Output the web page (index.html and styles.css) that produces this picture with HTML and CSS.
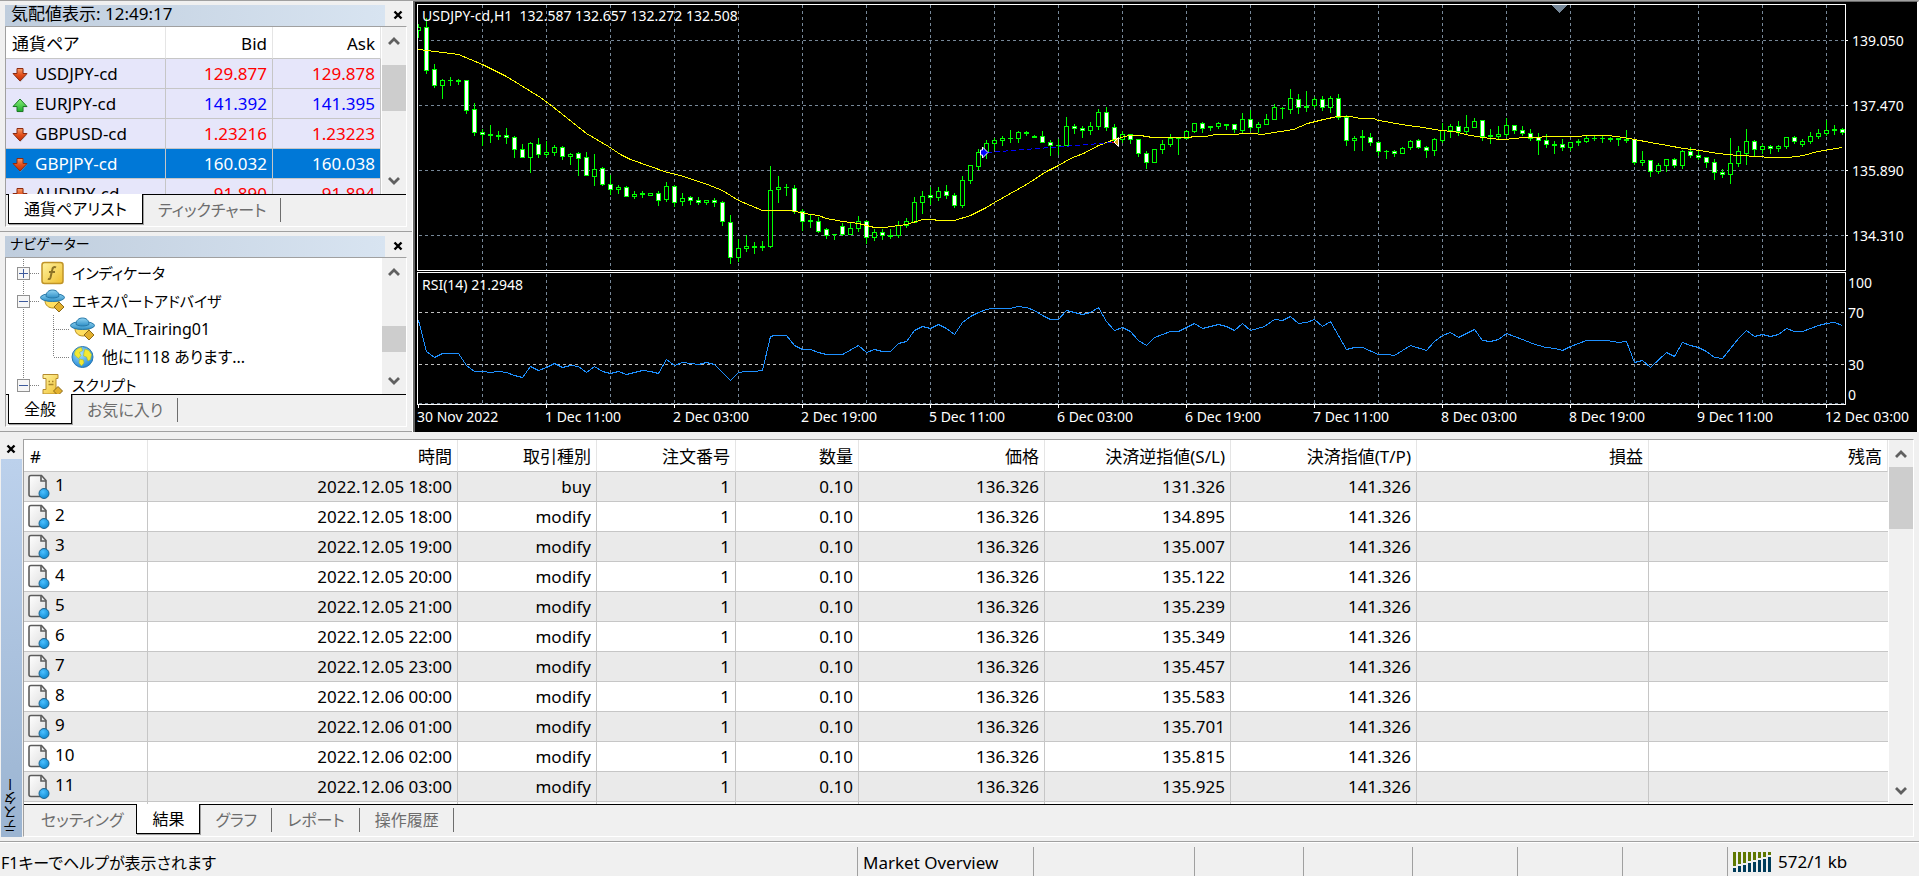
FILE: index.html
```html
<!DOCTYPE html>
<html lang="ja">
<head>
<meta charset="utf-8">
<meta name="viewport" content="width=device-width, initial-scale=1">
<title>USDJPY-cd,H1</title>
<link rel="stylesheet" href="styles.css">
</head>
<body>
<svg class="defs" aria-hidden="true">
  <defs>
    <linearGradient id="g-red" x1="0" y1="0" x2="0" y2="1"><stop offset="0" stop-color="#f9a06a"/><stop offset=".5" stop-color="#e2501c"/><stop offset="1" stop-color="#c23008"/></linearGradient>
    <linearGradient id="g-green" x1="0" y1="0" x2="0" y2="1"><stop offset="0" stop-color="#8af07a"/><stop offset="1" stop-color="#1fae2b"/></linearGradient>
    <linearGradient id="g-gold" x1="0" y1="0" x2="1" y2="1"><stop offset="0" stop-color="#fff3a0"/><stop offset="1" stop-color="#efbf2e"/></linearGradient>
    <linearGradient id="g-hat" x1="0" y1="0" x2="0" y2="1"><stop offset="0" stop-color="#8fd3f2"/><stop offset="1" stop-color="#2f8fc6"/></linearGradient>
    <linearGradient id="g-page" x1="0" y1="0" x2="1" y2="1"><stop offset="0" stop-color="#ffffff"/><stop offset="1" stop-color="#dcdcdc"/></linearGradient>
    <radialGradient id="g-ball" cx=".4" cy=".35" r=".7"><stop offset="0" stop-color="#4cc0ff"/><stop offset="1" stop-color="#0a86cf"/></radialGradient>
    <radialGradient id="g-globe" cx=".4" cy=".35" r=".7"><stop offset="0" stop-color="#a8e2ff"/><stop offset="1" stop-color="#1c84d6"/></radialGradient>
    <symbol id="i-down" viewBox="0 0 16 16"><path d="M5 1.500h6v5h4L8 14.500 1 6.500h4z" transform="translate(.5 .8)" fill="#999" opacity=".5"/><path d="M5 1.500h6v5h4L8 14 1 6.500h4z" fill="url(#g-red)" stroke="#8e2a10"/></symbol>
    <symbol id="i-up" viewBox="0 0 16 16"><path d="M5 14.500h6v-5h4L8 2 1 9.500h4z" transform="translate(.5 .8)" fill="#999" opacity=".5"/><path d="M5 14.500h6v-5h4L8 2 1 9.500h4z" fill="url(#g-green)" stroke="#1c7a26"/></symbol>
    <symbol id="i-func" viewBox="0 0 24 24"><rect x="1.500" y="1.500" width="21" height="21" rx="2.500" fill="url(#g-gold)" stroke="#c09428" stroke-width="1.500"/><path d="M15.500 6.500c-2-1.200-3.300 0-3.700 2L10 16.500c-.4 1.600-1.200 2-2.500 1.200M8.500 11h6" fill="none" stroke="#8c7326" stroke-width="2"/></symbol>
    <symbol id="i-expert" viewBox="0 0 25 24"><path d="M5 11.500c0 5 4 7.500 8 7.500s6-3 6-7z" fill="#ffdf60" stroke="#b58b1c"/><ellipse cx="12.500" cy="8.500" rx="12" ry="4" fill="url(#g-hat)" stroke="#2878a8"/><path d="M6 7.500C6 3 9 1 12.500 1S19 3 19 7.500c-3.500 2-9.500 2-13 0z" fill="url(#g-hat)" stroke="#2878a8"/><path d="M19 13l5 5-5 5-5-5z" fill="#e2b02e" stroke="#8c6a18"/></symbol>
    <symbol id="i-globe" viewBox="0 0 24 24"><circle cx="12" cy="12" r="10.500" fill="url(#g-globe)" stroke="#2d78ae"/><path d="M5 5.500c2-2 4-3 6-3l1 3-3 2 1.500 3-2.500 3-3-2.500C3.500 10 4 7.500 5 5.500zM14.500 4l4 1.500 2.500 4-1 5-2.500 1.500-1.500-4-3-1 .5-3.500zM9 14l4 1 .5 3-2.500 3-2.500-3z" fill="#f4e832" stroke="#9cb838" stroke-width=".6"/></symbol>
    <symbol id="i-script" viewBox="0 0 24 24"><path d="M2.500 1.500h15v4h-2v11h3v4.500h-16v-4.500h3v-11h-3z" fill="url(#g-gold)" stroke="#b58b2c"/><path d="M8 8.500h1.500m2 0H13M8 11.500h5" stroke="#a88428" stroke-width="1.500"/><path d="M17.500 13.500l4.500 4.500-4.500 4.500-4.500-4.500z" fill="#e2b02e" stroke="#8c6a18"/></symbol>
    <symbol id="i-doc" viewBox="0 0 24 26"><path d="M4 1.500h10.500l4.500 5v16H4c-1.400 0-2-.6-2-2v-17c0-1.400.6-2 2-2z" fill="url(#g-page)" stroke="#5c5c5c" stroke-width="1.600"/><path d="M14 1.500V7h5" fill="none" stroke="#5c5c5c" stroke-width="1.600"/><circle cx="17" cy="19.500" r="5" fill="url(#g-ball)" stroke="#20648e"/></symbol>
    <symbol id="i-close" viewBox="0 0 10 10"><path d="M1.500 1.500l7 7m0-7l-7 7" stroke="#000" stroke-width="2.400"/></symbol>
    <symbol id="i-chev-up" viewBox="0 0 12 10"><path d="M1 8l5-5 5 5" fill="none" stroke="#606060" stroke-width="2.800"/></symbol>
    <symbol id="i-chev-down" viewBox="0 0 12 10"><path d="M1 2l5 5 5-5" fill="none" stroke="#606060" stroke-width="2.800"/></symbol>
    <symbol id="i-box" viewBox="0 0 13 13"><rect x=".5" y=".5" width="12" height="12" fill="#f6f6f6" stroke="#919191"/><path d="M2 6.500h9" stroke="#3d5a9c"/></symbol>
  </defs>
</svg>

<main class="workspace">
  <div class="dock">
    <section class="panel market">
      <header class="titlebar"><h2 class="title">気配値表示: 12:49:17</h2><button class="close" aria-label="閉じる"><svg width="10" height="10"><use href="#i-close"/></svg></button></header>
      <div class="frame">
        <div class="view">
          <div class="clip">
            <table class="grid quotes">
              <colgroup><col class="c-symbol"><col class="c-bid"><col class="c-ask"></colgroup>
              <thead><tr><th class="left">通貨ペア</th><th>Bid</th><th>Ask</th></tr></thead>
              <tbody>
                <tr class="down"><td><svg class="arrow"><use href="#i-down"/></svg>USDJPY-cd</td><td>129.877</td><td>129.878</td></tr>
                <tr class="up"><td><svg class="arrow"><use href="#i-up"/></svg>EURJPY-cd</td><td>141.392</td><td>141.395</td></tr>
                <tr class="down"><td><svg class="arrow"><use href="#i-down"/></svg>GBPUSD-cd</td><td>1.23216</td><td>1.23223</td></tr>
                <tr class="selected"><td><svg class="arrow"><use href="#i-down"/></svg>GBPJPY-cd</td><td>160.032</td><td>160.038</td></tr>
                <tr class="down"><td><svg class="arrow"><use href="#i-down"/></svg>AUDJPY-cd</td><td>91.890</td><td>91.894</td></tr>
              </tbody>
            </table>
          </div>
          <div class="scrollbar"><button class="step" aria-label="上へ"><svg width="12" height="10"><use href="#i-chev-up"/></svg></button><div class="track"><div class="thumb thumb-market"></div></div><button class="step" aria-label="下へ"><svg width="12" height="10"><use href="#i-chev-down"/></svg></button></div>
        </div>
        <nav class="tabs"><button class="tab active">通貨ペアリスト</button><button class="tab">ティックチャート</button></nav>
      </div>
    </section>

    <section class="panel navigator">
      <header class="titlebar"><h2 class="title small">ナビゲーター</h2><button class="close" aria-label="閉じる"><svg width="10" height="10"><use href="#i-close"/></svg></button></header>
      <div class="frame">
        <div class="view">
          <div class="clip">
            <ul class="tree">
              <li class="node kana"><svg class="guide" width="34" height="28"><path class="dots" d="M17.500 0v28M24 14.500h10"/><use href="#i-box" x="11" y="8" width="13" height="13"/><path d="M17.500 10v9" stroke="#3d5a9c"/></svg><svg class="icon"><use href="#i-func"/></svg>インディケータ</li>
              <li class="node kana"><svg class="guide" width="34" height="28"><path class="dots" d="M17.500 0v28M24 14.500h10"/><use href="#i-box" x="11" y="8" width="13" height="13"/></svg><svg class="icon"><use href="#i-expert"/></svg>エキスパートアドバイザ</li>
              <li class="node"><svg class="guide" width="64" height="28"><path class="dots" d="M17.500 0v28M47.500 0v28M47.500 14.500h17"/></svg><svg class="icon"><use href="#i-expert"/></svg>MA_Trairing01</li>
              <li class="node"><svg class="guide" width="64" height="28"><path class="dots" d="M17.500 0v28M47.500 0v14M47.500 14.500h17"/></svg><svg class="icon"><use href="#i-globe"/></svg>他に1118 あります...</li>
              <li class="node kana"><svg class="guide" width="34" height="28"><path class="dots" d="M17.500 0v14M24 14.500h10"/><use href="#i-box" x="11" y="8" width="13" height="13"/></svg><svg class="icon"><use href="#i-script"/></svg>スクリプト</li>
            </ul>
          </div>
          <div class="scrollbar"><button class="step" aria-label="上へ"><svg width="12" height="10"><use href="#i-chev-up"/></svg></button><div class="track"><div class="thumb thumb-nav"></div></div><button class="step" aria-label="下へ"><svg width="12" height="10"><use href="#i-chev-down"/></svg></button></div>
        </div>
        <nav class="tabs"><button class="tab active">全般</button><button class="tab">お気に入り</button></nav>
      </div>
    </section>
  </div>

  <section class="chart"><svg id="chart" viewBox="415 2 1502 429" preserveAspectRatio="xMinYMin meet" role="img" aria-label="USDJPY-cd,H1"></svg></section>
</main>

<section class="tester">
  <div class="side">
    <button class="close" aria-label="閉じる"><svg width="10" height="10"><use href="#i-close"/></svg></button>
    <h2 class="side-title">テスター</h2>
  </div>
  <div class="frame">
    <div class="view">
      <div class="clip">
        <table class="grid results">
          <colgroup><col class="w-no"><col class="w-time"><col class="w-kind"><col class="w-kind"><col class="w-lots"><col class="w-price"><col class="w-price"><col class="w-price"><col class="w-profit"><col></colgroup>
          <thead><tr><th class="left">#</th><th>時間</th><th>取引種別</th><th>注文番号</th><th>数量</th><th>価格</th><th>決済逆指値(S/L)</th><th>決済指値(T/P)</th><th>損益</th><th>残高</th></tr></thead>
          <tbody id="results"></tbody>
        </table>
      </div>
      <div class="scrollbar"><button class="step" aria-label="上へ"><svg width="12" height="10"><use href="#i-chev-up"/></svg></button><div class="track"><div class="thumb thumb-tester"></div></div><button class="step" aria-label="下へ"><svg width="12" height="10"><use href="#i-chev-down"/></svg></button></div>
    </div>
    <nav class="tabs"><button class="tab">セッティング</button><button class="tab active">結果</button><button class="tab">グラフ</button><button class="tab">レポート</button><button class="tab">操作履歴</button></nav>
  </div>
</section>

<footer class="status">
  <div class="cell help">F1キーでヘルプが表示されます</div>
  <div class="cell s1">Market Overview</div>
  <div class="cell s2"></div>
  <div class="cell s3"></div>
  <div class="cell s3"></div>
  <div class="cell s4"></div>
  <div class="cell s4"></div>
  <div class="cell s4"></div>
  <div class="cell net"><svg width="38" height="20" shape-rendering="crispEdges"><path fill="#5f7800" d="M0 0h3v14H0zM5 0h3v12H5zM10 0h3v11h-3zM15 0h3v9h-3zM20 0h3v8h-3zM25 0h3v6h-3zM30 0h3v5h-3zM35 0h3v3h-3z"/><path fill="#003c5a" d="M0 16h3v4H0zM5 14h3v6H5zM10 13h3v7h-3zM15 11h3v9h-3zM20 10h3v10h-3zM25 8h3v12h-3zM30 7h3v13h-3zM35 5h3v15h-3z"/></svg>572/1 kb</div>
</footer>
<script src="app.js"></script>
</body>
</html>
```

FILE: styles.css
```css
* { box-sizing: border-box; }
html, body { height: 100%; }
body {
  margin: 0;
  display: flex;
  flex-direction: column;
  background: #f0f0f0;
  color: #000;
  font-family: "Noto Sans", "Noto Sans CJK JP", sans-serif;
  font-size: 17px;
  line-height: 24px;
  font-feature-settings: "palt";
  overflow: hidden;
}
button { font: inherit; font-feature-settings: inherit; color: inherit; border: 0; background: none; padding: 0; margin: 0; }
h2 { margin: 0; font-size: inherit; font-weight: normal; }
.defs { position: absolute; width: 0; height: 0; }

.workspace { display: flex; flex: none; border-top: 1px solid #a0a0a0; }
.dock { flex: none; width: 413px; display: flex; flex-direction: column; border-right: 1px solid #fff; }

.panel { display: flex; flex-direction: column; padding: 3px 5px 4px; border-bottom: 1px solid #a0a0a0; }
.market { height: 231px; }
.navigator { height: 200px; }
.titlebar { display: flex; align-items: center; height: 22px; flex: none; }
.title { flex: 1; height: 21px; line-height: 18px; padding-left: 6px; background: linear-gradient(90deg, #bfcddd, #d8e4f1); }
.title.small { font-size: 14px; line-height: 16px; padding-left: 5px; }
.close { width: 20px; height: 20px; margin-left: 3px; display: grid; place-items: center; }
.titlebar .close { width: 18px; margin-left: 4px; }

.frame { flex: 1; min-height: 0; min-width: 0; display: flex; flex-direction: column; border: 1px solid #a0a0a0; border-right-color: #fff; border-bottom-color: #fff; }
.view { flex: 1; min-height: 0; display: flex; background: #fff; }
.clip { flex: 1; min-width: 0; overflow: hidden; }

.scrollbar { flex: none; width: 25px; display: flex; flex-direction: column; background: #f0f0f0; border-left: 1px solid #fff; }
.step { width: 24px; height: 27px; flex: none; display: grid; place-items: center; }
.track { flex: 1; }
.thumb { width: 24px; background: #cdcdcd; }
.thumb-market { margin-top: 11px; height: 46px; }
.thumb-nav { margin-top: 41px; height: 26px; }
.thumb-tester { height: 62px; }

.tabs { flex: none; display: flex; height: 32px; padding-left: 2px; border-top: 1px solid #000; font-size: 16px; }
.tab { height: 30px; padding: 0 15px; color: #6d6d6d; position: relative; }
.tab:not(.active)::after { content: ""; position: absolute; right: 0; top: 3px; height: 24px; border-right: 1px solid #6d6d6d; }
.tab:has(+ .active) { padding-right: 13px; }
.tab:has(+ .active)::after { display: none; }
.tab.active { margin-top: -1px; height: 30px; background: #fff; color: #000; border: 1px solid #000; border-top: 0; box-shadow: 1px 1px 0 #a0a0a0; }

.grid { border-collapse: separate; border-spacing: 0; table-layout: fixed; width: 100%; }
.grid th, .grid td { height: 30px; padding: 0 5px 0 6px; text-align: right; font-weight: normal; white-space: nowrap; border-right: 1px solid #c6c6c6; border-bottom: 1px solid #c6c6c6; line-height: 24px; }
.grid th { height: 32px; padding-top: 2px; border-right-color: #e5e5e5; }
.grid .left, .grid td:first-child { text-align: left; }
.grid svg { display: inline-block; vertical-align: middle; }

.c-symbol { width: 160px; }
.c-bid { width: 107px; }
.quotes td { background: #e6e6fa; }
.arrow { width: 16px; height: 16px; margin-right: 7px; }
.down td { color: #f00; }
.up td { color: #00f; }
.quotes td:first-child { color: #000; }
.quotes .selected td { background: #0078d7; color: #fff; }

.tree { list-style: none; margin: 0; padding: 1px 0 0; font-size: 16px; }
.node { display: flex; align-items: center; height: 28px; white-space: nowrap; }
.node.kana { font-size: 15px; }
.guide { flex: none; }
.dots { stroke: #808080; stroke-dasharray: 1 1; fill: none; shape-rendering: crispEdges; }
.icon { width: 25px; height: 24px; margin-right: 7px; flex: none; }

.chart { flex: 1; min-width: 0; background: #000; border: solid #696969; border-width: 1px 0 0 2px; border-right: 2px solid #fff; }
.chart svg { display: block; width: 100%; height: auto; font-size: 14px; fill: #fff; }

.tester { flex: 1; min-height: 0; display: flex; padding: 7px 5px 4px 0; border-bottom: 1px solid #a0a0a0; }
.side { flex: none; width: 23px; display: flex; flex-direction: column; padding: 0 1px; }
.side .close { margin: 0; height: 20px; flex: none; }
.side-title { flex: 1; writing-mode: vertical-rl; transform: rotate(180deg); background: linear-gradient(0deg, #bcd1ec, #9bb4d1); font-size: 14px; line-height: 20px; padding-top: 4px; }
.w-no { width: 124px; }
.w-time { width: 310px; }
.w-kind { width: 139px; }
.w-lots { width: 123px; }
.w-price { width: 186px; }
.w-profit { width: 232px; }
.results td:first-child { padding-left: 3px; }
.results tbody tr:nth-child(odd) td { background: #eaeaea; }
.results td:last-child { border-right: 0; }
.doc { width: 24px; height: 26px; margin-right: 4px; }

.status { flex: none; height: 34px; display: flex; padding: 4px 0 1px; border-top: 1px solid #fff; }
.cell { flex: none; border-left: 1px solid #a0a0a0; padding-left: 5px; line-height: 32px; height: 29px; white-space: nowrap; }
.cell.help { flex: 1; border-left: 0; padding-left: 1px; font-size: 16px; }
.s1 { width: 176px; }
.s2 { width: 161px; }
.s3 { width: 109px; }
.s4 { width: 105px; }
.cell.net { width: 192px; display: flex; align-items: center; gap: 7px; }
```

FILE: app.js
```js
// Price bars, one per hour: high, body top, body bottom, low (chart px), f = down bar, h = up bar
const bars = `24 27 30 37 h|18 27 70 73 f|64 69 85 87 f|79 80 85 98 h|77 80 80 85 h|79 80 81 84 h|80 80 110 113 f|103 109 132 135 f
129 132 134 145 f|125 134 135 142 h|131 135 136 139 h|128 135 137 143 f|136 137 149 157 f|144 149 157 157 f|142 143 157 172 h|138 144 154 157 f
141 152 154 156 h|145 147 152 155 h|146 147 156 159 f|153 154 156 164 h|152 153 158 175 f|152 157 175 175 f|154 169 176 185 h|167 168 184 185 f
175 184 189 194 f|185 187 189 193 h|186 187 196 196 f|191 194 196 198 h|191 193 194 197 h|193 193 195 195 h|191 193 200 205 f|182 186 199 201 h
185 186 202 206 f|193 198 201 205 h|196 197 200 204 f|197 200 202 204 f|200 200 202 204 h|198 200 202 206 f|201 202 221 225 f|215 222 257 263 f
239 248 257 261 h|235 246 248 251 h|242 246 247 253 h|241 246 247 250 h|166 190 246 247 h|176 187 189 202 h|184 187 187 195 h|185 188 211 213 f
209 211 221 230 f|214 220 221 227 h|217 221 231 232 f|228 229 235 238 f|234 234 234 239 h|223 226 234 235 f|222 228 234 234 h|216 221 228 231 h
220 221 237 243 f|229 232 237 240 h|229 232 235 239 f|229 235 236 238 h|221 225 235 237 h|218 221 225 227 h|197 202 222 222 h|191 196 202 213 h
187 195 197 204 f|187 191 197 200 h|185 191 195 198 f|193 195 205 207 f|176 180 205 207 h|165 165 180 183 h|149 152 166 169 h|140 143 152 158 h
138 140 143 149 h|136 138 140 145 h|130 138 138 142 h|131 132 138 142 h|131 132 133 135 h|135 136 137 137 h|131 136 142 142 f|140 142 145 155 f
139 145 145 154 h|117 126 145 145 h|124 126 128 133 f|126 128 130 137 f|122 126 130 134 h|109 112 126 129 h|107 112 127 130 f|124 127 140 142 f
131 134 139 142 h|134 134 139 143 f|139 139 153 156 f|151 153 162 168 f|149 149 162 162 h|140 144 149 153 h|134 138 144 146 h|137 138 138 154 h
130 131 138 138 h|123 123 131 132 h|122 123 128 132 f|126 126 127 130 h|122 123 126 128 h|124 124 125 129 h|124 124 129 132 f|113 119 130 133 h
110 119 127 130 f|122 124 127 132 h|114 119 124 124 h|104 107 119 119 h|107 108 108 118 h|89 98 109 113 h|94 99 107 113 f|91 106 107 111 h
97 99 105 107 h|96 99 107 110 f|96 98 107 112 h|94 98 117 119 f|115 117 140 145 f|136 138 140 150 h|130 136 137 150 h|133 137 142 145 f
141 142 151 155 f|150 151 151 158 h|150 151 153 156 f|147 148 153 153 h|140 141 147 149 h|139 140 147 148 f|146 147 150 157 f|138 139 150 155 h
123 130 140 142 h|124 126 130 137 h|121 126 131 135 f|115 127 131 133 h|118 121 127 127 h|120 120 136 140 f|129 135 136 143 h|126 134 136 138 h
118 125 134 136 h|125 125 130 133 f|126 130 133 135 f|129 133 138 140 f|133 137 140 154 f|134 140 144 147 f|141 144 145 153 h|139 144 147 150 f
142 142 147 150 h|139 141 142 145 h|136 138 141 142 h|136 138 138 140 h|136 138 138 142 h|137 138 139 141 h|138 138 139 145 h|130 139 140 142 h
139 139 162 164 f|151 160 162 165 h|160 160 171 176 f|163 165 171 173 h|159 159 165 171 h|158 159 165 167 f|150 151 165 168 h|147 151 155 157 f
151 155 157 159 f|157 157 162 167 f|159 162 172 179 f|169 172 174 177 f|138 163 174 183 h|146 151 163 166 h|129 141 153 164 h|140 141 149 156 f
144 146 149 153 h|145 146 148 153 f|145 146 148 151 h|137 137 146 148 h|136 137 141 143 f|139 141 144 146 h|132 136 141 143 h|129 133 136 138 h
120 130 133 135 h|125 129 130 134 h|128 129 132 134 f`.split(/[|\n]/);

const average = '418,49 458,54 482,64 506,76 540,97 552,106 586,133 608,146 620,154 630,159 667,172 680,175 707,184 722,190 738,200 762,210 790,210 810,214 818,215 826,218 842,221 858,223 874,227 884,227 906,224 922,219 933,219 937,220 954,220 970,215 986,207 994,202 1010,193 1026,184 1046,171 1058,165 1070,158 1083,153 1098,145 1114,139 1128,135 1140,135 1152,137 1188,137 1194,136 1205,136 1215,134 1237,134 1240,133 1253,133 1262,134 1280,131 1293,129 1307,123 1323,119 1337,116 1350,116 1360,118 1373,118 1378,120 1390,122 1407,125 1423,127 1440,130 1453,131 1470,135 1483,137 1490,138 1500,139 1517,138 1520,137 1540,137 1543,136 1580,136 1583,135 1607,135 1623,137 1634,139 1650,142 1667,145 1683,148 1700,150 1717,153 1737,155 1760,156 1767,157 1788,157 1803,155 1817,151 1842,147';

const rsi = '418,320 426,351 434,357 442,353 458,353 466,365 474,371 482,371 490,372 498,371 506,372 514,375 522,377 530,366 538,370 546,367 554,363 562,367 570,365 578,366 586,372 594,366 602,371 610,373 618,371 626,374 634,372 642,370 650,371 658,373 666,359 674,365 682,362 698,364 706,362 714,364 730,380 738,372 746,371 754,371 762,370 770,336 774,335 786,335 794,345 802,349 810,349 818,352 826,354 842,354 858,345 866,352 874,349 882,351 890,351 898,343 906,341 914,330 922,326 930,328 938,324 946,328 954,334 962,322 970,316 978,312 986,309 992,308 1010,308 1017,306 1026,307 1034,310 1042,315 1050,319 1058,319 1066,310 1082,314 1090,312 1098,307 1106,321 1114,330 1122,327 1130,331 1138,340 1146,345 1154,337 1170,331 1178,331 1194,323 1202,328 1210,326 1218,324 1226,326 1234,330 1242,323 1250,330 1264,326 1274,319 1282,320 1290,316 1298,323 1306,322 1314,319 1322,326 1330,321 1338,335 1346,349 1354,347 1362,347 1378,354 1386,354 1394,355 1410,345 1426,350 1434,341 1442,335 1450,332 1458,337 1474,329 1482,340 1490,341 1498,339 1506,333 1522,339 1532,343 1545,347 1555,348 1562,350 1570,346 1586,340 1607,340 1618,342 1626,341 1634,362 1642,360 1650,367 1666,352 1674,356 1682,342 1690,345 1698,347 1706,351 1714,357 1722,358 1738,338 1746,330 1754,336 1762,334 1770,336 1778,334 1786,328 1794,331 1802,331 1818,325 1826,323 1834,322 1842,325';

const times = ['30 Nov 2022', '1 Dec 11:00', '2 Dec 03:00', '2 Dec 19:00', '5 Dec 11:00', '6 Dec 03:00', '6 Dec 19:00', '7 Dec 11:00', '8 Dec 03:00', '8 Dec 19:00', '9 Dec 11:00', '12 Dec 03:00'];

function drawChart() {
  const out = [];
  let grid = '';
  for (let x = 482; x <= 1826; x += 64) grid += `M${x}.5 5V270M${x}.5 274V404`;
  for (const y of [40, 105, 170, 235, 403]) grid += `M419 ${y}.5H1845`;
  out.push(`<g shape-rendering="crispEdges" fill="none"><path d="${grid}" stroke="#778899" stroke-dasharray="3 3"/>`);
  out.push('<path d="M419 312.5H1845M419 364.5H1845" stroke="#c0c0c0" stroke-dasharray="3 3"/>');
  out.push('<path d="M1551 5h16l-8 8z" fill="#778899"/>');

  let green = '', white = '', black = '';
  bars.forEach((bar, i) => {
    const [hi, top, bottom, lo, kind] = bar.split(' ');
    const x = 418 + i * 8, h = bottom - top + 1;
    const left = i === 0 ? x : x - 2, w = i === 0 ? 3 : 5;
    green += `M${x} ${hi}h1V${+lo + 1}h-1zM${left} ${top}h${w}v${h}h-${w}z`;
    if (h > 2) {
      const inner = `M${i === 0 ? x : x - 1} ${+top + 1}h${i === 0 ? 2 : 3}v${h - 2}h-${i === 0 ? 2 : 3}z`;
      if (kind === 'f') white += inner; else black += inner;
    }
  });
  out.push(`<path d="${green}" fill="#0f0"/><path d="${white}" fill="#fff"/><path d="${black}" fill="#000"/>`);
  out.push(`<g transform="translate(.5 .5)"><polyline points="${average}" stroke="#ff0"/><polyline points="${rsi}" stroke="#1e90ff"/></g>`);
  out.push('<path d="M987 152.500L1113 142.500" stroke="#00f" stroke-dasharray="5 3"/></g>');
  out.push('<path d="M980.500 150h2v-3l5.500 5.500-5.500 5.500v-3h-2z" fill="#00f" stroke="#fff"/><path d="M1118.500 137.500v9l-4.500-4.500z" fill="#daa520" stroke="#fff"/><path d="M1112 142.500h2" stroke="#f00"/>');

  let ticks = '';
  for (const y of [40, 105, 170, 235]) ticks += `M1846 ${y}.5h2`;
  times.forEach((t, i) => { ticks += `M${418 + i * 128}.5 405v3`; });
  out.push(`<path shape-rendering="crispEdges" fill="none" stroke="#fff" d="M417.500 4.500H1845.500V270.500H417.500zM417.500 272.500H1845.500V404.500H417.500z${ticks}"/>`);

  const text = (x, y, s) => out.push(`<text x="${x}" y="${y}" xml:space="preserve">${s}</text>`);
  text(422, 21, 'USDJPY-cd,H1  132.587 132.657 132.272 132.508');
  text(422, 290, 'RSI(14) 21.2948');
  [['139.050', 46], ['137.470', 111], ['135.890', 176], ['134.310', 241]].forEach(([s, y]) => text(1852, y, s));
  [['100', 288], ['70', 318], ['30', 370], ['0', 400]].forEach(([s, y]) => text(1848, y, s));
  times.forEach((t, i) => text(417 + i * 128, 422, t));
  document.getElementById('chart').innerHTML = out.join('');
}

const stops = ['131.326', '134.895', '135.007', '135.122', '135.239', '135.349', '135.457', '135.583', '135.701', '135.815', '135.925'];
const stamps = ['05 18', '05 18', '05 19', '05 20', '05 21', '05 22', '05 23', '06 00', '06 01', '06 02', '06 03'];

function fillResults() {
  const rows = stops.map((sl, i) =>
    `<tr><td><svg class="doc"><use href="#i-doc"/></svg>${i + 1}</td><td>2022.12.${stamps[i]}:00</td><td>${i ? 'modify' : 'buy'}</td><td>1</td><td>0.10</td><td>136.326</td><td>${sl}</td><td>141.326</td><td></td><td></td></tr>`);
  rows.push(`<tr>${'<td></td>'.repeat(10)}</tr>`);
  document.getElementById('results').innerHTML = rows.join('');
}

drawChart();
fillResults();
```
